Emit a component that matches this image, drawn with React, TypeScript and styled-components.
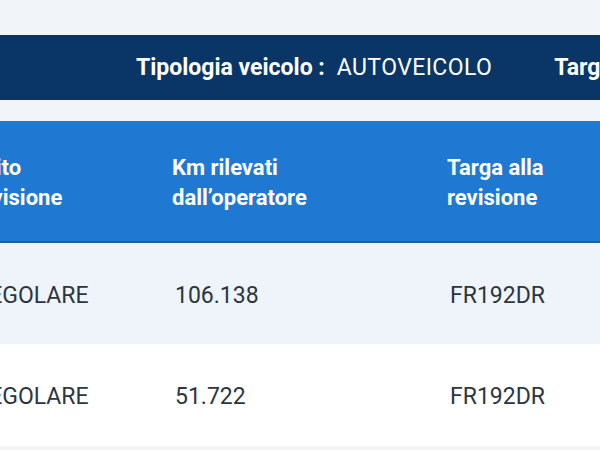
import React from "react";
import styled, { createGlobalStyle } from "styled-components";

interface IRevision {
	esito: string;
	km: string;
	targa: string;
}

const revisions: IRevision[] = [
	{ esito: "REGOLARE", km: "106.138", targa: "FR192DR" },
	{ esito: "REGOLARE", km: "51.722", targa: "FR192DR" },
];

const App: React.FC = () => {
	return (
		<>
			<GlobalStyle />
			<Page>
				<InfoBar>
					<InfoItem>
						<InfoLabel>Tipologia veicolo :</InfoLabel>
						<InfoValue>AUTOVEICOLO</InfoValue>
					</InfoItem>
					<Divider />
					<InfoItem>
						<InfoLabel>Targa :</InfoLabel>
						<InfoValue>FR192DR</InfoValue>
					</InfoItem>
				</InfoBar>
				<Table>
					<thead>
						<tr>
							<Th>
								Esito
								<br />
								revisione
							</Th>
							<Th>
								Km rilevati
								<br />
								dall’operatore
							</Th>
							<Th>
								Targa alla
								<br />
								revisione
							</Th>
						</tr>
					</thead>
					<tbody>
						{revisions.map((r, k) => (
							<Row key={k} $striped={k % 2 === 0}>
								<Td>{r.esito}</Td>
								<Td>{r.km}</Td>
								<Td>{r.targa}</Td>
							</Row>
						))}
					</tbody>
				</Table>
			</Page>
		</>
	);
};

export default App;

const GlobalStyle = createGlobalStyle`
	html, body {
		margin: 0;
		padding: 0;
		background: #f1f5fa;
		overflow: hidden;
		font-family: Roboto, "Open Sans", sans-serif;
	}
`;

const Page = styled.div`
	width: 640px;
	padding-top: 35px;
`;

const InfoBar = styled.div`
	display: flex;
	align-items: center;
	height: 65px;
	padding-left: 136px;
	background: #0a3667;
	color: #ffffff;
	white-space: nowrap;
`;

const InfoItem = styled.div`
	display: flex;
	align-items: baseline;
	gap: 12px;
	font-size: 23px;
`;

const InfoLabel = styled.span`
	font-weight: 700;
`;

const InfoValue = styled.span`
	font-weight: 400;
	letter-spacing: 0.4px;
`;

const Divider = styled.div`
	width: 2px;
	height: 40px;
	margin: 0 31px;
	background: #ffffff;
`;

const Table = styled.table`
	margin-top: 21px;
	margin-left: -50px;
	width: 710px;
	border-collapse: collapse;
	table-layout: fixed;
`;

const Th = styled.th`
	height: 116px;
	padding: 4px 0 0 22px;
	background: #1f78d2;
	border-bottom: 2px solid #1c609f;
	color: #ffffff;
	font-size: 22px;
	font-weight: 700;
	line-height: 30px;
	text-align: left;

	&:nth-child(1) {
		width: 178px;
	}
	&:nth-child(2) {
		width: 253px;
	}
`;

const Row = styled.tr<{ $striped: boolean }>`
	height: 102px;
	background: ${(p) => (p.$striped ? "#eff4fa" : "#ffffff")};
`;

const Td = styled.td`
	padding: 3px 0 0 25px;
	color: #2b3640;
	font-size: 23px;
	font-weight: 400;
`;
